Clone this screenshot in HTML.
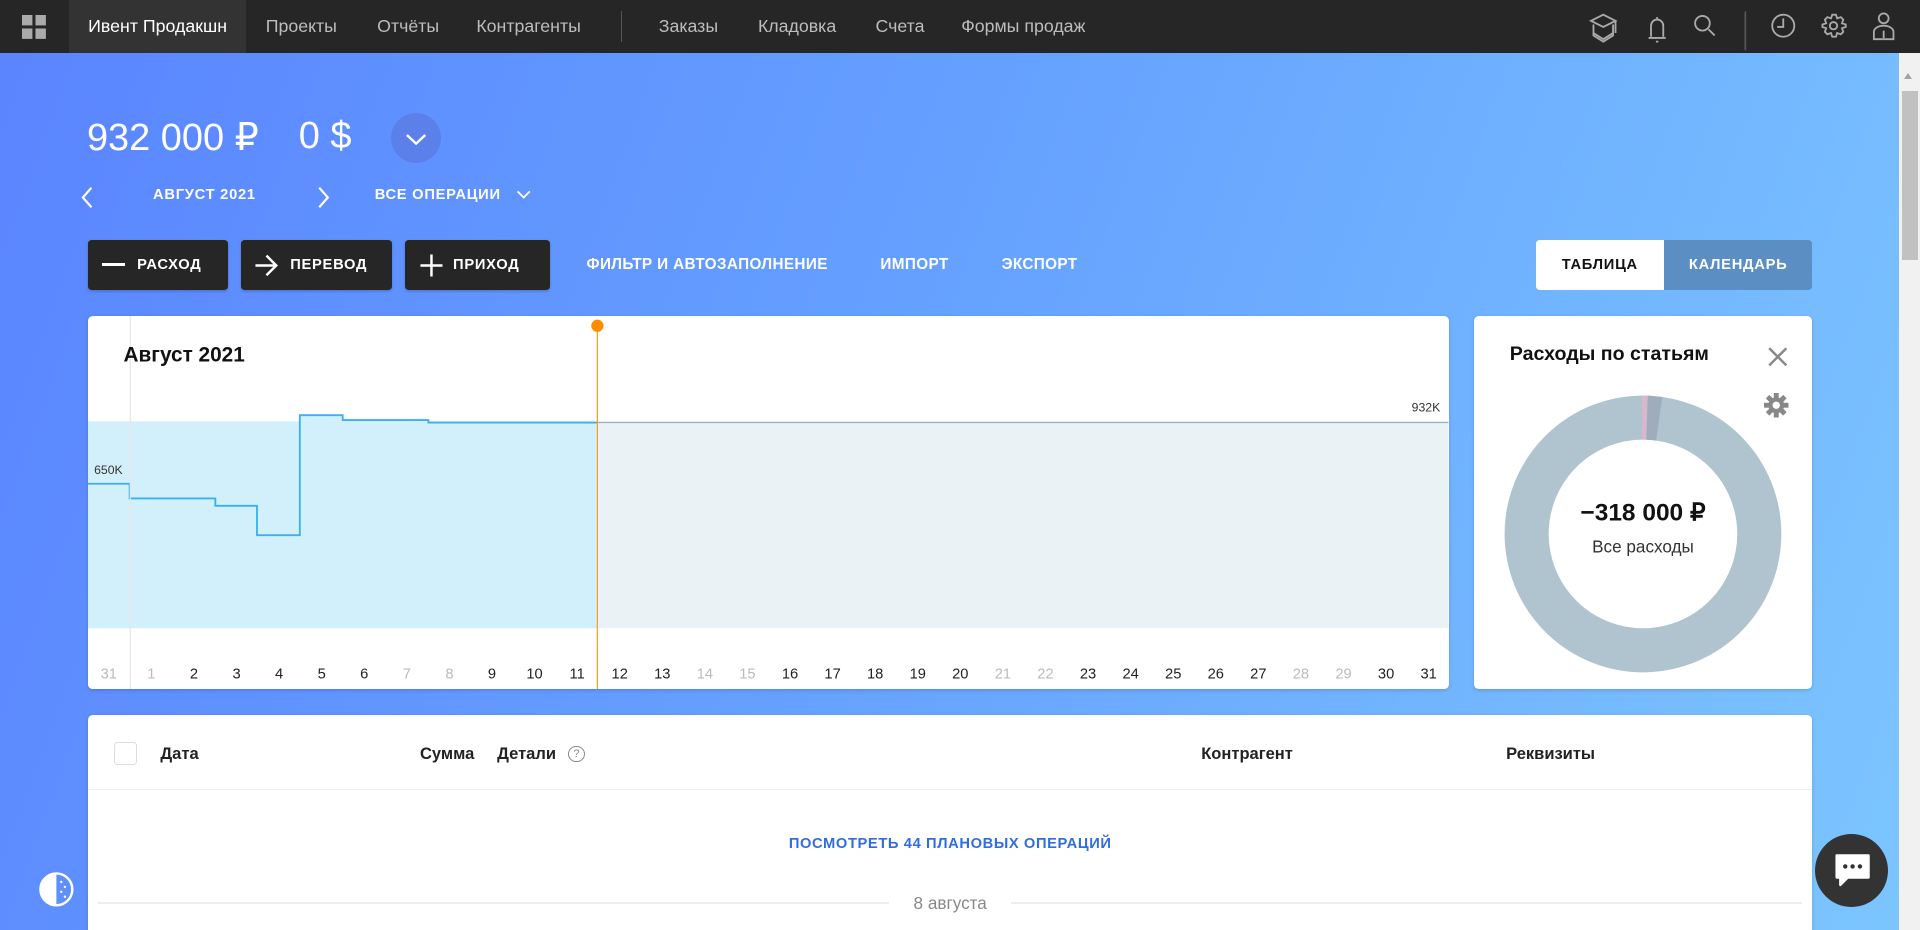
<!DOCTYPE html>
<html><head><meta charset="utf-8"><style>
html,body{margin:0;padding:0;overflow:hidden;width:1920px;height:930px}
body{font-family:"Liberation Sans","DejaVu Sans",sans-serif}
#w{zoom:1.22449;width:1568px;height:760px;position:relative;overflow:hidden;background:linear-gradient(110deg,#5a84ff 0%,#65a0ff 45%,#7cc6ff 100%)}
.a{position:absolute}
.top{left:0;top:0;width:1568px;height:43px;background:#262626}
.nav{top:0;height:43px;line-height:43px;font-size:14.5px;color:#bdbdbd;white-space:nowrap}
.bt{background:#262626;border-radius:3px;height:41px;top:196px;color:#fff;font-weight:bold;font-size:12px;letter-spacing:.6px;line-height:41px;box-shadow:0 1px 2px rgba(0,0,0,.2)}
.lk{top:196px;line-height:41px;color:#fff;font-weight:bold;font-size:12.5px;letter-spacing:.3px}
.card{background:#fff;border-radius:4px;box-shadow:0 1px 3px rgba(0,0,0,.15)}
.th{top:608px;font-size:13.5px;font-weight:bold;color:#222}
</style></head><body><div id="w">
<div class="a top"></div>
<svg class="a" style="left:18px;top:12px" width="20" height="20"><rect x="0" y="0" width="8.5" height="8.5" fill="#aaa"/><rect x="11" y="0" width="8.5" height="8.5" fill="#aaa"/><rect x="0" y="11" width="8.5" height="8.5" fill="#aaa"/><rect x="11" y="11" width="8.5" height="8.5" fill="#aaa"/></svg>
<div class="a" style="left:56px;top:0;width:145px;height:43px;background:#333"></div>
<div class="a nav" style="left:72px;color:#fff">Ивент Продакшн</div>
<div class="a nav" style="left:217px">Проекты</div>
<div class="a nav" style="left:308px">Отчёты</div>
<div class="a nav" style="left:389px">Контрагенты</div>
<div class="a" style="left:507px;top:9px;width:1px;height:25px;background:#555"></div>
<div class="a nav" style="left:538px">Заказы</div>
<div class="a nav" style="left:619px">Кладовка</div>
<div class="a nav" style="left:715px">Счета</div>
<div class="a nav" style="left:785px">Формы продаж</div>
<svg class="a" style="left:1290px;top:0" width="278" height="43" fill="none" stroke="#aaa" stroke-width="1.5">
<path d="M9 17l10-5 10 5-10 5z M11 20v9l8 5 8-5v-9 M11 27l8 5 8-5 M29 17v10"/>
<path d="M56 31h14 M58 30v-9a5 5 0 0 1 10 0v9 M63 14v2 M62 34h2"/>
<circle cx="100" cy="19" r="6"/><path d="M105 24l5 5"/>
<path d="M135 10v31" stroke="#555"/>
<circle cx="166" cy="21" r="9"/><path d="M166 15v7h-5"/>
<circle cx="207" cy="21" r="3"/><path d="M207 12l2 0 1 3 3-1 2 2-1 3 3 1v2l-3 1 1 3-2 2-3-1-1 3h-3l-1-3-3 1-2-2 1-3-3-1v-2l3-1-1-3 2-2 3 1 1-3z"/>
<circle cx="248" cy="15" r="4"/><path d="M240 32v-6a8 5 0 0 1 16 0v6z M248 25v6"/>
</svg>
<div class="a" style="left:1425px;top:9px;width:1px;height:25px;background:#555"></div>

<div class="a" style="left:1551px;top:43px;width:17px;height:717px;background:#f1f1f1"></div>
<div class="a" style="left:1553px;top:74px;width:13px;height:138px;background:#c1c1c1"></div>
<div class="a" style="left:1555px;top:60px;width:0;height:0;border:4px solid transparent;border-bottom:5px solid #a3a3a3;border-top:0"></div>

<div class="a" style="left:71px;top:94px;font-size:31px;color:#fff;white-space:nowrap">932 000 ₽</div>
<div class="a" style="left:244px;top:94px;font-size:31px;color:#fff;white-space:nowrap">0 $</div>
<div class="a" style="left:319px;top:92px;width:41px;height:41px;border-radius:50%;background:#5b80ea"></div>
<svg class="a" style="left:319px;top:92px" width="41" height="41"><path d="M13 18l7.5 7 7.5-7" stroke="#fff" stroke-width="2" fill="none"/></svg>
<svg class="a" style="left:64px;top:150px" width="400" height="22" fill="none" stroke="#fff" stroke-width="1.8"><path d="M11 3l-7 8 7 8"/><path d="M197 3l7 8-7 8"/><path d="M359 6l5 5 5-5" stroke-width="1.5"/></svg>
<div class="a" style="left:125px;top:153px;font-size:12px;font-weight:bold;color:#fff;letter-spacing:.6px">АВГУСТ 2021</div>
<div class="a" style="left:306px;top:153px;font-size:12px;font-weight:bold;color:#fff;letter-spacing:.6px">ВСЕ ОПЕРАЦИИ</div>

<div class="a bt" style="left:72px;width:114px"><span style="position:absolute;left:11px;top:19px;width:19px;height:2px;background:#fff"></span><span style="position:absolute;left:40px">РАСХОД</span></div>
<div class="a bt" style="left:197px;width:123px"><svg style="position:absolute;left:10px;top:10px" width="22" height="22" fill="none" stroke="#fff" stroke-width="2"><path d="M2 11h17 M11 3l8 8-8 8"/></svg><span style="position:absolute;left:40px">ПЕРЕВОД</span></div>
<div class="a bt" style="left:331px;width:118px"><svg style="position:absolute;left:10px;top:10px" width="22" height="22" fill="none" stroke="#fff" stroke-width="2"><path d="M2 11h18 M11 2v18"/></svg><span style="position:absolute;left:39px">ПРИХОД</span></div>
<div class="a lk" style="left:479px">ФИЛЬТР И АВТОЗАПОЛНЕНИЕ</div>
<div class="a lk" style="left:719px">ИМПОРТ</div>
<div class="a lk" style="left:818px">ЭКСПОРТ</div>
<div class="a" style="left:1254px;top:196px;width:105px;height:41px;background:#fff;border-radius:3px 0 0 3px;font-size:12px;font-weight:bold;letter-spacing:.6px;line-height:41px;text-align:center;color:#111">ТАБЛИЦА</div>
<div class="a" style="left:1359px;top:196px;width:121px;height:41px;background:#5b8fc4;border-radius:0 3px 3px 0;font-size:12px;font-weight:bold;letter-spacing:.6px;line-height:41px;text-align:center;color:#fff">КАЛЕНДАРЬ</div>

<div class="a card" style="left:72px;top:258px;width:1111px;height:305px;overflow:hidden">
<svg class="a" style="left:0;top:0" width="1111" height="305" font-family="Liberation Sans,sans-serif">
<rect x="0" y="86" width="416" height="169" fill="#d2f0fc"/>
<rect x="416" y="86" width="695" height="169" fill="#eaf2f5"/>
<path d="M0 137h34v12h70v6h34v24h35V81h35v4h70v2h138V305H0z" fill="#d2f0fc" stroke="none"/>
<path d="M0 137h34v12h70v6h34v24h35V81h35v4h70v2h138" fill="none" stroke="#3ab0f0" stroke-width="1.5"/>
<path d="M416 87h695" stroke="#9ab0bc" stroke-width="1"/>
<rect x="0" y="255" width="1111" height="50" fill="#fff"/>
<path d="M34.5 0v305" stroke="#e6e6e6"/>
<path d="M416 8v297" stroke="#f7a21b" stroke-width="1"/>
<circle cx="416" cy="8" r="5" fill="#fb8c00"/>
<text x="29" y="37" font-size="17" font-weight="bold" fill="#111">Август 2021</text>
<text x="5" y="129" font-size="10" fill="#333">650K</text>
<text x="1081" y="78" font-size="10" fill="#333">932K</text>
<g font-size="12" text-anchor="middle" id="days"></g>
</svg></div>

<div class="a card" style="left:1204px;top:258px;width:276px;height:305px">
<div class="a" style="left:29px;top:22px;font-size:16px;font-weight:bold;color:#111">Расходы по статьям</div>
<svg class="a" style="left:240px;top:25px" width="16" height="16" stroke="#888" stroke-width="2"><path d="M1 1l14 14M15 1L1 15"/></svg>
<svg class="a" style="left:237px;top:63px" width="20" height="20"><g fill="#888"><circle cx="10" cy="10" r="6.5"/><rect x="8" y="0" width="4" height="20"/><rect x="0" y="8" width="20" height="4"/><rect x="8" y="0" width="4" height="20" transform="rotate(45 10 10)"/><rect x="8" y="0" width="4" height="20" transform="rotate(-45 10 10)"/></g><circle cx="10" cy="10" r="3" fill="#fff"/></svg>
<svg class="a" style="left:0;top:0" width="276" height="305">
<circle cx="138" cy="178" r="95" fill="none" stroke="#b0c4d0" stroke-width="36"/>
<circle cx="138" cy="178" r="95" fill="none" stroke="#d9b8cb" stroke-width="36" stroke-dasharray="4 600" transform="rotate(-90.5 138 178)"/>
<circle cx="138" cy="178" r="95" fill="none" stroke="#9eadbb" stroke-width="36" stroke-dasharray="10 600" transform="rotate(-88 138 178)"/>
<text x="138" y="167" text-anchor="middle" font-size="20" font-weight="bold" fill="#111" font-family="Liberation Sans,sans-serif">−318 000 ₽</text>
<text x="138" y="193" text-anchor="middle" font-size="14" fill="#333" font-family="Liberation Sans,sans-serif">Все расходы</text>
</svg></div>

<div class="a card" style="left:72px;top:584px;width:1408px;height:200px"></div>
<div class="a" style="left:93px;top:606px;width:17px;height:17px;border:1px solid #ddd;border-radius:3px;background:#fff"></div>
<div class="a th" style="left:131px">Дата</div>
<div class="a th" style="left:343px">Сумма</div>
<div class="a th" style="left:406px">Детали</div>
<div class="a" style="left:464px;top:609px;width:12px;height:12px;border:1px solid #888;border-radius:50%;font-size:9px;text-align:center;line-height:12px;color:#888">?</div>
<div class="a th" style="left:981px">Контрагент</div>
<div class="a th" style="left:1230px">Реквизиты</div>
<div class="a" style="left:72px;top:644px;width:1408px;height:1px;background:#eee"></div>
<div class="a" style="left:72px;top:683px;width:1408px;text-align:center;font-size:12px;font-weight:bold;letter-spacing:.5px;color:#2f6de1">ПОСМОТРЕТЬ 44 ПЛАНОВЫХ ОПЕРАЦИЙ</div>
<div class="a" style="left:80px;top:737px;width:1392px;height:1px;background:#eee"></div>
<div class="a" style="left:726px;top:729px;width:100px;background:#fff;text-align:center;font-size:14px;color:#888">8 августа</div>

<svg class="a" style="left:31px;top:711px" width="30" height="30"><circle cx="15" cy="15" r="13" fill="none" stroke="#fff" stroke-width="2"/><path d="M15 2a13 13 0 0 0 0 26z" fill="#fff"/><g fill="#fff"><circle cx="19" cy="9" r="1"/><circle cx="22" cy="13" r="1"/><circle cx="19" cy="17" r="1"/><circle cx="22" cy="21" r="1"/></g></svg>
<div class="a" style="left:1482px;top:681px;width:60px;height:60px;border-radius:50%;background:#333"></div>
<svg class="a" style="left:1497px;top:697px" width="32" height="30"><path d="M3 2h26v18H12l-6 6v-6H3z" fill="#fff" stroke="#fff" stroke-linejoin="round" stroke-width="2"/><g fill="#333"><circle cx="10" cy="11" r="1.8"/><circle cx="16" cy="11" r="1.8"/><circle cx="22" cy="11" r="1.8"/></g></svg>
</div>
<script>
var g=document.getElementById('days'),ns='http://www.w3.org/2000/svg';
var lab=[31];for(var i=1;i<=31;i++)lab.push(i);
var gray={0:1,1:1,7:1,8:1,14:1,15:1,21:1,22:1,28:1,29:1};
lab.forEach(function(d,i){var t=document.createElementNS(ns,'text');t.setAttribute('x',17+i*34.77);t.setAttribute('y',296);t.setAttribute('fill',gray[i]?'#bbb':'#222');t.textContent=d;g.appendChild(t);});
</script>
</body></html>
